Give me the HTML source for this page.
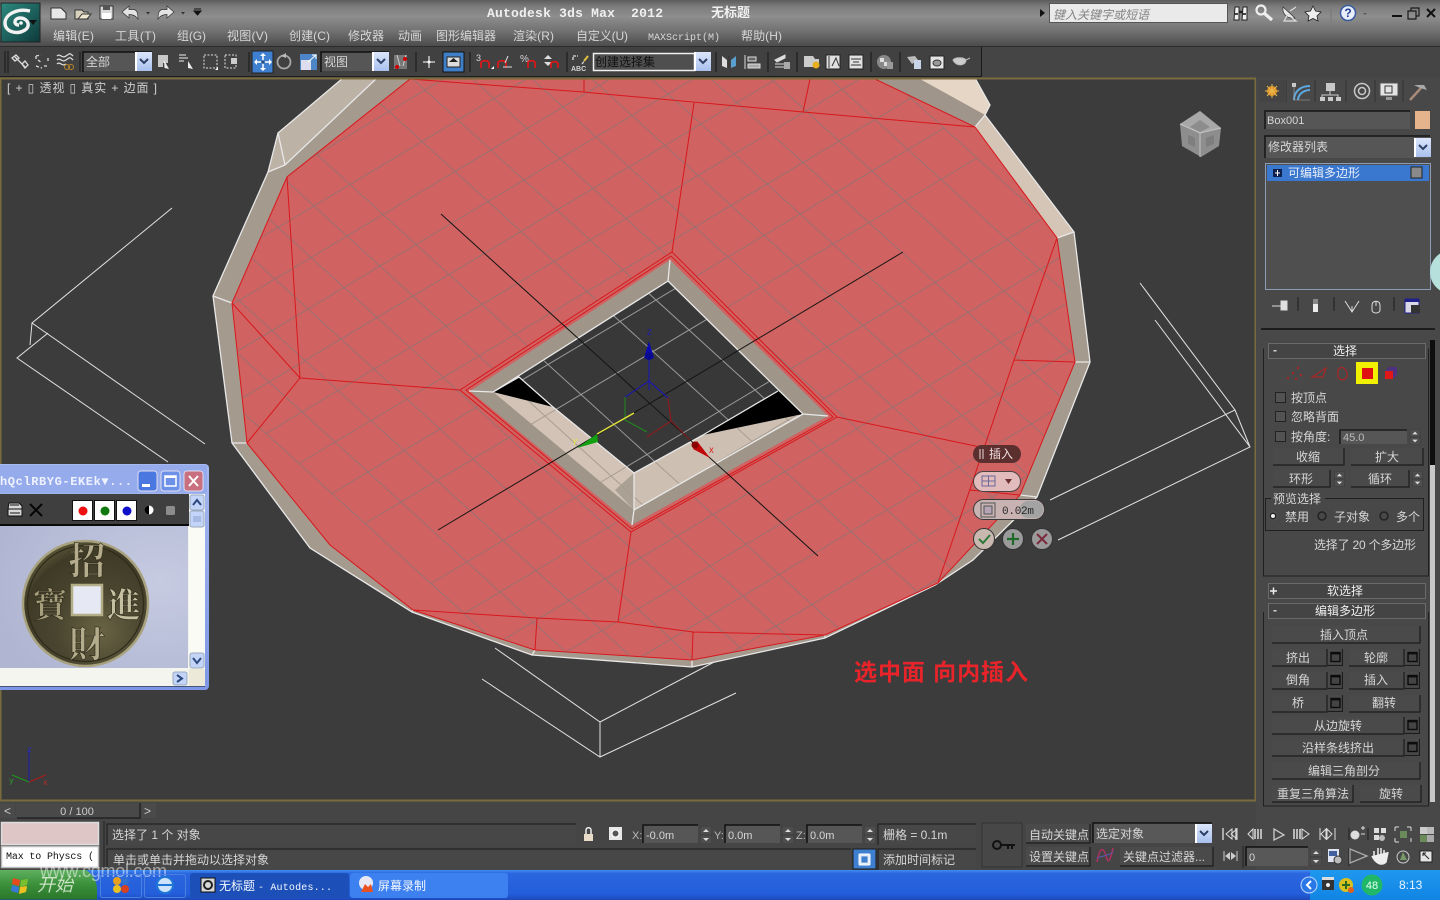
<!DOCTYPE html>
<html lang="zh"><head><meta charset="utf-8"><title>无标题 - Autodesk 3ds Max 2012</title>
<style>
html,body{margin:0;padding:0;background:#444;width:1440px;height:900px;overflow:hidden}
#wrap{position:relative;width:1440px;height:900px;overflow:hidden}
svg{display:block;position:absolute;left:0;top:0;overflow:hidden}
text{font-family:"Liberation Sans","Noto Sans CJK SC",sans-serif;font-size:12px;fill:#d6d6d6;white-space:pre}
.m{font-family:"Liberation Mono","Noto Sans CJK SC",monospace}
.c{text-anchor:middle}
.b{fill:#4a4a4a}
.k{fill:none;stroke:#1c1c1c;stroke-width:1.2}
.f{fill:#565656}
.w{fill:none;stroke:#e8e8e8;stroke-width:1.3}
.ic{fill:none;stroke:#dcdcdc;stroke-width:1.3}
.wire{fill:none;stroke:#e2e2e2;stroke-width:1}
.r{fill:none;stroke:#d8181c;stroke-width:1}
.hd{fill:#444;stroke:#6a6a6a;stroke-width:1}
.grp{fill:none;stroke:#202020;stroke-width:1}
.cn{font-family:"Noto Serif CJK SC",serif;font-weight:bold;stroke:#2e2a1a;stroke-width:.6}
</style></head><body><div id="wrap">
<svg width="1440" height="900" viewBox="0 0 1440 900" xmlns="http://www.w3.org/2000/svg">
<defs>
<linearGradient id="tb" x1="0" y1="0" x2="0" y2="1"><stop offset="0" stop-color="#5c5c5c"/><stop offset=".14" stop-color="#7c7c7c"/><stop offset=".36" stop-color="#8e8e8e"/><stop offset=".7" stop-color="#6e6e6e"/><stop offset="1" stop-color="#4c4c4c"/></linearGradient>
<linearGradient id="app" x1="0" y1="0" x2="1" y2="1"><stop offset="0" stop-color="#2c8a7f"/><stop offset="1" stop-color="#0e3a3c"/></linearGradient>
<linearGradient id="cab" x1="0" y1="0" x2="0" y2="1"><stop offset="0" stop-color="#dbe6fb"/><stop offset="1" stop-color="#a9c0ee"/></linearGradient>
<linearGradient id="task" x1="0" y1="0" x2="0" y2="1"><stop offset="0" stop-color="#3f8cf3"/><stop offset=".12" stop-color="#2a66de"/><stop offset=".8" stop-color="#245edb"/><stop offset="1" stop-color="#1c48b8"/></linearGradient>
<linearGradient id="start" x1="0" y1="0" x2="0" y2="1"><stop offset="0" stop-color="#5fb05f"/><stop offset=".5" stop-color="#3a8f3a"/><stop offset="1" stop-color="#2a772a"/></linearGradient>
<linearGradient id="tray" x1="0" y1="0" x2="0" y2="1"><stop offset="0" stop-color="#1f98ee"/><stop offset="1" stop-color="#1184e4"/></linearGradient>
<linearGradient id="xp" x1="0" y1="0" x2="0" y2="1"><stop offset="0" stop-color="#a5b9f0"/><stop offset="1" stop-color="#7d97e6"/></linearGradient>
<radialGradient id="coin" cx=".62" cy=".72" r=".75"><stop offset="0" stop-color="#6a6444"/><stop offset=".45" stop-color="#4a4630"/><stop offset=".85" stop-color="#3e3a26"/><stop offset="1" stop-color="#5a5638"/></radialGradient>
<radialGradient id="pic" cx=".85" cy=".4" r=".9"><stop offset="0" stop-color="#c6cbe2"/><stop offset="1" stop-color="#b0b6d2"/></radialGradient>
<clipPath id="vp"><rect x="1" y="79" width="1253" height="721"/></clipPath>
<clipPath id="redc"><path d="M410 79 287 177 232 303 247 443 330 545 413 610 535 650 692 660 825 635 938 583 1020 495 1075 362 1057 238 975 127 875 79Z"/></clipPath>
<clipPath id="floorc"><path d="M668 281 778 391 703 435 634 473 553 407 519 377Z"/></clipPath>
<clipPath id="creamc"><path d="M493 392 553 407 634 473 703 435 803 414 634 510Z"/></clipPath>
<symbol id="ca" viewBox="0 0 17 19" width="17" height="19"><rect width="17" height="19" fill="url(#cab)"/><rect width="2" height="19" fill="#fff"/><path d="M5 7 9 11 13 7" fill="none" stroke="#2c3f66" stroke-width="2"/></symbol>
<symbol id="sp" viewBox="0 0 12 18" width="12" height="18"><rect width="12" height="18" fill="#3a3a3a"/><rect x=".5" y=".5" width="11" height="8" fill="#4e4e4e"/><rect x=".5" y="9.5" width="11" height="8" fill="#4e4e4e"/><path d="M3 6 6 3 9 6ZM3 12 6 15 9 12Z" fill="#ddd"/></symbol>
<symbol id="sq" viewBox="0 0 15 17" width="15" height="17"><rect width="15" height="17" fill="#4a4a4a"/><path d="M14.5 0V16.5H0" class="k"/><rect x="3" y="3.5" width="9" height="9" fill="#444" stroke="#0c0c0c" stroke-width="1.4"/><rect x="3" y="3" width="9" height="2.4" fill="#0c0c0c"/></symbol>
</defs>

<!-- base -->
<rect width="1440" height="900" fill="#454545"/>
<rect width="1440" height="46" fill="url(#tb)"/>
<rect y="46" width="1440" height="1" fill="#2c2c2c"/>
<rect x="0" y="47" width="982" height="30" fill="#414141"/>
<path d="M981.5 47V77" stroke="#1a1a1a"/>
<rect x="0" y="76" width="982" height="1" fill="#1e1e1e"/>

<!-- viewport -->
<rect x="0" y="78" width="1256" height="723" fill="#3c3c3c"/>
<g clip-path="url(#vp)">
<!-- wire boxes -->
<path class="wire" d="M172 208 32 323 205 444M48 333 17 358 168 462M32 323 30 345"/>
<path class="wire" d="M1140 283 1235 410 1050 500M1155 320 1250 447 1058 540M1235 410 1250 447"/>
<path class="wire" d="M495 648 600 722 718 660M482 679 600 757 736 693M600 722V757"/>
<!-- outer body -->
<path d="M343 78 278 133 268 172 213 296 232 443 310 548 412 612 532 655 692 667 825 638 935 585 973 560 1037 497 1090 362 1074 232 985 115 990 105 975 78Z" fill="#a59a8e"/>
<path d="M343 78 377 78 285 165 268 172 278 133Z" fill="#bdb2a6"/>
<path d="M918 78 975 78 990 105 985 115Z" fill="#e6d6c6"/>
<path d="M985 115 1074 232 1057 238 975 127Z" fill="#d4c5b6"/>
<path d="M875 78 918 78 985 115 975 127Z" fill="#a0958a"/>
<path class="w" d="M343 78 278 133 268 172 213 296 232 443 310 548 412 612 532 655 692 667 825 638 935 585 973 560 1037 497 1090 362 1074 232 985 115 990 105 975 78"/>
<path class="w" d="M377 78 285 165 268 172M278 133 285 165M213 296 232 303M232 443 247 443M412 612 413 608M532 655 535 650M692 667 692 660M825 638 825 635M935 585 938 583M1037 497 1020 495M1090 362 1075 362M1074 232 1057 238M985 115 975 127"/>
<!-- red face -->
<path d="M410 79 287 177 232 303 247 443 330 545 413 610 535 650 692 660 825 635 938 583 1020 495 1075 362 1057 238 975 127 875 79Z" fill="#d06262"/>
<!-- grid -->
<g clip-path="url(#redc)"><g transform="matrix(33 30 36 -21.5 650 403)"><path vector-effect="non-scaling-stroke" fill="none" stroke="#9c7070" stroke-width="1" d="M-10 -7V10M-9 -7V10M-8 -7V10M-7 -7V10M-6 -7V10M-5 -7V10M-4 -7V10M-3 -7V10M-2 -7V10M-1 -7V10M1 -7V10M2 -7V10M3 -7V10M4 -7V10M5 -7V10M6 -7V10M7 -7V10M8 -7V10M-10 -7H8M-10 -6H8M-10 -5H8M-10 -4H8M-10 -3H8M-10 -2H8M-10 -1H8M-10 1H8M-10 2H8M-10 3H8M-10 4H8M-10 5H8M-10 6H8M-10 7H8M-10 8H8M-10 9H8M-10 10H8"/></g></g>
<!-- red lines -->
<path class="r" d="M410 79 287 177 232 303 247 443 330 545 413 610 535 650 692 660 825 635 938 583 1020 495 1075 362 1057 238 975 127 875 79M410 79 583 92 803 112 975 127M584 79V92M810 79 803 112M694 103 672 252M287 177 300 378 247 443M232 303 300 378 460 390M837 417 985 448M970 490 1020 495M1057 238 1014 360 938 583M1014 360 1075 362M631 532 618 622M413 610 537 618 618 622 693 632 825 635M537 618 535 650M693 632 692 660"/>
<!-- hole -->
<path d="M672 252 837 417 631 532 460 390Z" fill="#d06262"/>
<path d="M470 391 670 260 828 416 632 525Z" fill="#a09589"/>
<path class="r" d="M672 252 837 417 631 532 460 390ZM466 390 671 256 833 417 632 529Z"/>
<path d="M493 392 668 281 803 414 634 510Z" fill="#383838"/>
<path d="M493 392 519 377 553 407Z" fill="#000"/><path d="M803 414 778 391 703 435Z" fill="#000"/>
<path d="M493 392 553 407 634 473 634 510Z" fill="#d2c3b6"/>
<path d="M634 510 634 473 703 435 803 414Z" fill="#cdbfb2"/>
<path d="M615 490 634 473 634 510Z" fill="#aaa094"/>
<g clip-path="url(#creamc)"><g transform="matrix(33 30 36 -21.5 650 403)"><path vector-effect="non-scaling-stroke" fill="none" stroke="#a89d92" d="M-1 -5V5M1 -5V5M2 -5V5M3 -5V5M4 -5V5M-4 -5H4M-4 -4H4M-4 -3H4M-4 -2H4M-4 -1H4M-4 1H4M-4 2H4M-4 3H4"/></g></g>
<g clip-path="url(#floorc)"><g transform="matrix(33 30 36 -21.5 650 403)"><path vector-effect="non-scaling-stroke" fill="none" stroke="#9a9a9a" d="M-4 -5V5M-3 -5V5M-2 -5V5M-1 -5V5M1 -5V5M2 -5V5M3 -5V5M-5 -4H4M-5 -3H4M-5 -2H4M-5 -1H4M-5 1H4M-5 2H4M-5 3H4"/></g></g>
<path class="w" d="M469 391 493 392 668 281 670 260M668 281 803 414 828 416M803 414 634 510 632 525M634 510V473L703 435M634 473 553 407 519 377 493 392M703 435 778 391"/>
<!-- world axes -->
<path d="M441 214 818 556M438 530 903 252" stroke="#141414" stroke-width="1" fill="none"/>
<!-- gizmo -->
<path d="M649 360V390M625 397 649 381 668 398" fill="none" stroke="#1a1aa8" stroke-width="1.2"/>
<path d="M625 397V420L647 432" fill="none" stroke="#1f8a1f"/>
<path d="M668 398 671 421 647 437" fill="none" stroke="#8a1c1c" stroke-width="1.2"/>
<path d="M671 421 690 440" stroke="#8a1c1c"/>
<path d="M634 413 597 434" stroke="#e6e63a" stroke-width="1.3"/>
<path d="M649 341 654 358 649 360 644 358Z" fill="#0a0ab0"/><circle cx="649" cy="356" r="4" fill="#0a0a90"/>
<path d="M577 448 597 434 598 442Z" fill="#10a010"/>
<path d="M710 458 693 449 697 441Z" fill="#c00808"/><circle cx="695" cy="445" r="3.5" fill="#800"/>
<text x="647" y="335" class="m" style="font-size:8px;fill:#1a1ac0">Z</text><text x="572" y="445" class="m" style="font-size:9px;fill:#e8e83a">Y</text><text x="709" y="453" class="m" style="font-size:8px;fill:#d81010">X</text>
<!-- red note -->
<text x="854" y="680" style="font-size:23px;font-weight:bold;fill:#e8242a" textLength="174">选中面 向内插入</text>
<!-- caddy -->
<rect x="973" y="445" width="48" height="18" rx="9" fill="#5c2f2f"/><path d="M980 449V459M983 449V459" stroke="#e8d8d8"/><text x="989" y="458" style="fill:#f0e0e0">插入</text>
<rect x="973.5" y="471.5" width="47" height="20" rx="10" fill="#e2bcbc" stroke="#4a4444"/>
<path d="M982 476H995V486H982ZM988.5 476V486M982 481H995" fill="none" stroke="#6a6a9a"/><path d="M1005 479H1012L1008.500 484Z" fill="#6a3030"/>
<rect x="973.5" y="499.500" width="71" height="20" rx="10" fill="#c9b2b2" stroke="#3a3a3a"/><rect x="1020" y="501" width="23" height="17" rx="8" fill="#a3a3a3"/>
<rect x="981" y="503" width="14" height="14" fill="none" stroke="#555"/><rect x="984" y="506" width="8" height="8" fill="#b5a5b5" stroke="#555"/>
<text x="1002" y="514" class="m" style="font-size:11px;fill:#2a2a2a" textLength="32">0.02m</text>
<circle cx="984" cy="539" r="10.500" fill="#c8b8b0" stroke="#333"/><path d="M979 539 983 543 990 535" fill="none" stroke="#2f7a3a" stroke-width="2"/>
<circle cx="1013" cy="539" r="10.500" fill="#9a9a9a" stroke="#333"/><path d="M1013 533V545M1007 539H1019" stroke="#1f6a2a" stroke-width="2.2"/>
<circle cx="1042" cy="539" r="10.500" fill="#9a9a9a" stroke="#333"/><path d="M1037 534 1047 544M1047 534 1037 544" stroke="#7a2a3a" stroke-width="2"/>
<!-- view cube -->
<path d="M1180 124 1200 111 1221 128 1219 146 1201 157 1182 146Z" fill="#8e8e8e"/><path d="M1180 124 1200 133 1221 128 1200 111Z" fill="#a8a8a8"/><path d="M1200 133V157M1180 124 1200 133 1221 128" stroke="#c4c4c4" fill="none"/><path d="M1190 127 1200 120 1210 127 1200 132Z" fill="#8c8c8c"/><path d="M1188 135 1195 138V147L1188 144ZM1206 138 1214 135V144L1206 147Z" fill="#7e7e7e"/>
<!-- small axes -->
<path d="M29 782V750" stroke="#1a1ab0"/><path d="M29 782 46 775" stroke="#b01a1a"/><path d="M29 782 12 775" stroke="#1a9a1a"/>
<text x="27" y="752" class="m" style="font-size:8px;fill:#2a2ac0">z</text><text x="43" y="785" class="m" style="font-size:8px;fill:#c02a2a">x</text><text x="9" y="783" class="m" style="font-size:8px;fill:#2aa02a">y</text>
</g>
<rect x=".5" y="78.500" width="1255" height="722" fill="none" stroke="#7a6b3c" stroke-width="2"/>
<text x="7" y="92" style="font-size:12px;fill:#cfcfcf" xml:space="preserve" textLength="150">[ + ▯ 透视 ▯ 真实 + 边面 ]</text>

<!-- app button -->
<rect x="1" y="3" width="39" height="39" fill="url(#app)" stroke="#222"/>
<path d="M30 11C18 8 5 14 5 23C5 32 17 35 25 30C31 26 28 18 20 18C14 18 13 25 19 25" fill="none" stroke="#f2f2f2" stroke-width="3.4"/><circle cx="21" cy="23" r="1.800" fill="#fff"/>
<path d="M29 20H37L33 25Z" fill="#111"/>
<!-- quick access -->
<path d="M51 8H61L66 13V19H51Z" fill="#e8e8e8" stroke="#333"/>
<path d="M75 10H82L84 12H88V19H75Z" fill="#d8d2bc" stroke="#333"/><path d="M78 19 82 14H91L87 19Z" fill="#eee6d0" stroke="#333"/>
<rect x="100" y="6" width="13" height="13" fill="#d8d8d8" stroke="#333"/><rect x="103" y="6" width="7" height="4" fill="#555"/><rect x="102" y="13" width="9" height="6" fill="#fff"/>
<path d="M122 12 129 6V9.500H133C137 9.500 138 13 138 19C136 16 133 14.500 129 14.500V18Z" fill="#e4e4e4" stroke="#333" stroke-width=".7"/>
<path d="M146 12H150L148 14.500Z" fill="#333"/>
<path d="M174 12 167 6V9.500H163C159 9.500 158 13 158 19C160 16 163 14.500 167 14.500V18Z" fill="#e4e4e4" stroke="#333" stroke-width=".7"/>
<path d="M181 12H185L183 14.500Z" fill="#333"/>
<path d="M194 9H201M194 11H201L197.500 15Z" fill="#111" stroke="#111"/>
<!-- title -->
<text x="487" y="17" class="m" style="font-size:13px;font-weight:bold;fill:#f0f0f0" textLength="176" xml:space="preserve">Autodesk 3ds Max  2012</text>
<text x="711" y="17" style="font-size:13px;font-weight:bold;fill:#f2f2f2">无标题</text>
<!-- search -->
<path d="M1040 9 1045 13 1040 17Z" fill="#111"/>
<rect x="1049.500" y="3.500" width="178" height="19" fill="#eaeaea" stroke="#555"/>
<text x="1053" y="19" style="font-style:italic;fill:#848484">键入关键字或短语</text>
<path d="M1235 7H1239V20H1234ZM1243 7H1247V20H1242Z" fill="#f0f0f0" stroke="#222"/><path d="M1239 12H1243" stroke="#222" stroke-width="2.500"/><path d="M1235 14H1238M1243 14H1246" stroke="#444" stroke-width="2"/>
<circle cx="1261" cy="10" r="4.500" fill="none" stroke="#eee" stroke-width="2.200"/><path d="M1264 13 1272 20" stroke="#eee" stroke-width="3.200"/>
<path d="M1283 7C1282 14 1287 19 1295 18Z" fill="#e8e8e8" stroke="#333" stroke-width=".7"/><path d="M1288 14 1284 21H1296L1291 17M1290 11 1296 7" fill="none" stroke="#ddd" stroke-width="1.200"/>
<path d="M1313 6 1315.500 11 1321 12 1317 16 1318 21 1313 18.500 1308 21 1309 16 1305 12 1310.500 11Z" fill="#eee" stroke="#222" stroke-width=".8"/>
<path d="M1331 4V22" stroke="#777"/>
<circle cx="1348" cy="13" r="7.500" fill="#e8eefa" stroke="#3a5aa0" stroke-width="1.500"/><text x="1348" y="17" class="c" style="font-size:12px;font-weight:bold;fill:#1f3f90">?</text>
<path d="M1363 13H1367L1365 15Z" fill="#555"/>
<rect x="1392" y="15" width="10" height="2" fill="#111"/>
<path d="M1408 11H1416V19H1408ZM1411 11V8H1419V16H1416" fill="none" stroke="#1a1a1a" stroke-width="1.200"/>
<path d="M1427 9 1435 17M1435 9 1427 17" stroke="#111" stroke-width="2"/>
<!-- menu -->
<g style="fill:#e2e2e2">
<text x="53" y="40" textLength="41">编辑(E)</text><text x="115" y="40" textLength="41">工具(T)</text><text x="177" y="40" textLength="29">组(G)</text><text x="227" y="40" textLength="41">视图(V)</text><text x="289" y="40" textLength="41">创建(C)</text><text x="348" y="40">修改器</text><text x="398" y="40">动画</text><text x="436" y="40">图形编辑器</text><text x="513" y="40" textLength="41">渲染(R)</text><text x="576" y="40" textLength="52">自定义(U)</text><text x="648" y="40" class="m" style="font-size:10px" textLength="72">MAXScript(M)</text><text x="741" y="40" textLength="41">帮助(H)</text>
</g>

<!-- main toolbar -->
<path d="M5 51V73M8 51V73M80 52V72M249 52V72M416 52V72M470 52V72M567 52V72M716 52V72M768 52V72M797 52V72M871 52V72M900 52V72" stroke="#1f1f1f" stroke-width="1.200"/>
<path class="ic" d="M14 56 19 61 22 64 26 68M12 58 16 55 19 58 15 61ZM22 64 25 61 28 65 25 68Z"/>
<path class="ic" d="M36 56 41 55M36 56 36 60M48 58 48 62M36 66 42 68M44 66 48 66M38 60 42 63" stroke-dasharray="3 2"/>
<path class="ic" d="M57 56C60 53 62 59 66 56S70 53 73 56M57 60C60 57 62 63 66 60S70 57 73 60M57 64C60 61 62 67 66 64"/><circle cx="67" cy="67" r="2.500" fill="none" stroke="#b8862a"/><circle cx="71" cy="67" r="2.500" fill="none" stroke="#b8862a"/>
<rect x="83" y="52" width="69" height="19" fill="#565656"/><path d="M83 72V52H152" stroke="#111" fill="none" stroke-width="1.500"/><text x="86" y="66">全部</text><use href="#ca" x="135" y="52"/>
<path d="M158 55H168V63H163V67H158Z" fill="#c8c8c8"/><path d="M164 60 169 69 164.500 68Z" fill="#eee"/>
<path d="M179 55H186M179 58H188M179 61H184" stroke="#eee"/><path d="M188 61 193 69 188 68Z" fill="#eee"/>
<rect x="204" y="55" width="13" height="13" fill="none" stroke="#e0e0e0" stroke-dasharray="2 1.500"/><path d="M218 67 215 70H218Z" fill="#fff"/>
<rect x="225" y="55" width="11" height="13" fill="none" stroke="#e0e0e0" stroke-dasharray="2 1.500"/><rect x="231" y="58" width="6" height="6" fill="#ccc"/>
<rect x="252" y="51" width="21" height="22" fill="#3f7fd0" stroke="#222"/>
<path d="M263 55V69M256 62H270" stroke="#fff" stroke-width="1.500"/><path d="M263 53 266 56H260ZM263 71 266 68H260ZM254 62 257 59V65ZM272 62 269 59V65Z" fill="#fff"/><circle cx="263" cy="62" r="1.800" fill="#20508a"/>
<circle cx="284" cy="62" r="6.500" fill="none" stroke="#a8a8a8" stroke-width="1.800"/><path d="M286 53 281 56 286 58Z" fill="#bbb"/>
<rect x="300" y="54" width="17" height="16" fill="#4c86c8"/><rect x="301" y="60" width="10" height="10" fill="#dde"/><path d="M308 62 316 55M312 55H316V59" stroke="#fff" fill="none"/>
<rect x="321" y="52" width="68" height="19" fill="#565656"/><path d="M321 72V52H389" stroke="#111" fill="none" stroke-width="1.500"/><text x="324" y="66">视图</text><use href="#ca" x="372" y="52"/>
<rect x="394" y="55" width="13" height="14" fill="#777"/><path d="M397 55 400 66M406 55 403 66" stroke="#ccc"/><circle cx="397" cy="67" r="2" fill="#c00"/><circle cx="405" cy="59" r="2" fill="#c00"/>
<path class="ic" d="M429 56V68M423 62H435"/><circle cx="429" cy="62" r="1.500" fill="#fff"/>
<rect x="443" y="52" width="21" height="20" fill="#3f7fc8" stroke="#111"/><rect x="447" y="57" width="13" height="10" fill="#ddd" stroke="#222"/><path d="M453.500 58 458 62H449Z" fill="#222"/>
<text x="476" y="61" style="font-size:9px">3</text><path d="M481 68V63C481 60 489 60 489 63V68" fill="none" stroke="#d81818" stroke-width="1.800"/><path d="M491 69 494 66V69Z" fill="#fff"/>
<path d="M498 68V63C498 60 506 60 506 63V68" fill="none" stroke="#d81818" stroke-width="1.800"/><path d="M508 56 505 63M503 67H512" stroke="#ddd" fill="none"/>
<text x="520" y="62" style="font-size:10px">%</text><path d="M528 68V63C528 60 535 60 535 63V68" fill="none" stroke="#d81818" stroke-width="1.800"/>
<path d="M544 59 548 55 552 59ZM544 62 548 66 552 62Z" fill="#ddd"/><path d="M551 68V64C551 61 558 61 558 64V68" fill="none" stroke="#d81818" stroke-width="1.800"/>
<path class="ic" d="M573 60V56H578M582 64 588 56" stroke-dasharray="3 1"/><path d="M584 61 588 56" stroke="#e0c040" stroke-width="2"/>
<text x="571" y="71" style="font-size:7px;font-weight:bold">ABC</text>
<rect x="593.500" y="53.500" width="101" height="17" fill="#4f4f4f" stroke="#f0f0f0" stroke-width="1.500"/><text x="595" y="66" style="fill:#111">创建选择集</text><use href="#ca" x="694" y="52"/>
<path d="M722 56 727 60V68L722 66Z" fill="#ddd"/><path d="M729 56V68" stroke="#333"/><path d="M736 56 731 60V68L736 66Z" fill="#59a0d0"/>
<path d="M745 55V69" stroke="#ddd"/><path d="M748 57H756V61H748Z" fill="#666" stroke="#ddd"/><path d="M748 64H760V68H748Z" fill="#aaa" stroke="#ddd"/>
<path d="M775 60 785 55V58L777 62ZM775 64H788M775 67H785" stroke="#ddd" fill="#ddd"/><rect x="784" y="62" width="6" height="7" fill="#aaa"/>
<path d="M804 56H813L815 59H819V67H804Z" fill="#ccc"/><circle cx="816" cy="65" r="3.500" fill="#e8b020"/>
<rect x="826" y="55" width="14" height="14" fill="#e0e0e0" stroke="#222"/><path d="M829 56V68M832 66 836 58 839 66" fill="none" stroke="#333"/>
<rect x="849" y="55" width="14" height="14" fill="#e0e0e0" stroke="#222"/><path d="M851 59H861M851 65H861M853 62H859" stroke="#333"/>
<circle cx="884" cy="62" r="7" fill="#888"/><path d="M880 58H884V62H880ZM884 62H888V66H884Z" fill="#ddd"/><rect x="887" y="62" width="6" height="7" fill="#999"/>
<path d="M907 57 915 56 918 60 912 64Z" fill="#bbb"/><rect x="914" y="60" width="7" height="9" fill="#c8d4e8"/>
<rect x="930" y="56" width="14" height="13" fill="#e4e4e4" stroke="#222"/><path d="M933 63C933 59 941 59 941 63C941 67 933 67 933 63" fill="#999" stroke="#333"/>
<path d="M953 60C955 57 964 57 966 60C966 66 956 67 953 60ZM966 60 970 58" fill="#ccc" stroke="#bbb"/>

<!-- right panel -->
<rect x="1256" y="78" width="184" height="792" fill="#484848"/>
<path d="M1286 80V102M1315 80V102M1346 80V102M1375 80V102M1403 80V102" stroke="#333"/>
<rect x="1259" y="80" width="27" height="22" fill="#444"/>
<circle cx="1272" cy="91" r="5" fill="#e09020"/><path d="M1265 91H1279M1272 84V98M1267 86 1277 96M1277 86 1267 96" stroke="#e8b850"/>
<path d="M1294 100C1294 92 1300 86 1310 86M1298 100C1298 95 1303 90 1310 90" fill="none" stroke="#5ca8e0" stroke-width="2"/><rect x="1292" y="83" width="4" height="4" fill="#ccc"/><path d="M1294 85V100H1310" fill="none" stroke="#aaa" stroke-width=".6"/>
<rect x="1326" y="83" width="9" height="8" fill="#c8c8c8"/><path d="M1330 91V95M1322 101V95H1338V101" fill="none" stroke="#ccc"/><rect x="1320" y="97" width="5" height="4" fill="#ccc"/><rect x="1328" y="97" width="5" height="4" fill="#ccc"/><rect x="1336" y="97" width="5" height="4" fill="#ccc"/>
<circle cx="1362" cy="91" r="7.500" fill="none" stroke="#c8c8c8" stroke-width="1.500"/><circle cx="1362" cy="91" r="3.500" fill="none" stroke="#c8c8c8" stroke-width="1.500"/>
<rect x="1380" y="83" width="18" height="13" fill="#e4e4e4" stroke="#555"/><rect x="1385" y="86" width="7" height="7" fill="none" stroke="#333"/><rect x="1386" y="97" width="6" height="3" fill="#999"/>
<path d="M1410 100 1421 88" stroke="#a88a78" stroke-width="2.500"/><path d="M1414 85H1424L1427 90 1420 88Z" fill="#aaa"/>
<rect x="1265" y="111" width="145" height="18" class="f"/><path d="M1265 129V111H1410" stroke="#151515" fill="none" stroke-width="1.500"/><text x="1267" y="124" style="font-size:11px">Box001</text>
<rect x="1415" y="111" width="15" height="18" fill="#e6b48c"/>
<rect x="1265" y="136" width="165" height="22" class="f"/><path d="M1265 158V136H1430" stroke="#151515" fill="none" stroke-width="1.500"/><text x="1268" y="151" style="font-size:12px">修改器列表</text><use href="#ca" x="1414" y="138"/>
<rect x="1265.500" y="163.500" width="165" height="126" fill="#4f4f4f" stroke="#8c9cb4"/><rect x="1267" y="165" width="162" height="1" fill="#222"/>
<rect x="1267" y="165" width="162" height="16" fill="#3a78d0"/>
<rect x="1273" y="169" width="9" height="8" fill="#10204c"/><path d="M1277.500 170V176M1275 173H1280" stroke="#fff"/>
<text x="1288" y="177" style="fill:#e8eef8">可编辑多边形</text><rect x="1411" y="167" width="11" height="11" fill="#8a8a8a" stroke="#222"/>
<circle cx="1452" cy="272" r="22" fill="#b5e0dc"/>
<path d="M1272 306H1281M1281 301H1287V310H1281Z" fill="#e0e0e0" stroke="#ddd"/>
<path d="M1298 297V311M1334 297V311M1394 297V311" stroke="#1c1c1c"/>
<rect x="1313" y="299" width="5" height="13" fill="#ececec"/><rect x="1313" y="299" width="5" height="5" fill="#888"/>
<path d="M1345 301 1352 312 1359 301M1352 312V306" fill="none" stroke="#ddd"/>
<path d="M1372 305C1372 300 1380 300 1380 305V310C1380 314 1372 314 1372 310Z" fill="none" stroke="#ddd"/><path d="M1376 301V306" stroke="#ddd"/>
<rect x="1405" y="299" width="14" height="14" fill="#d8d8e8" stroke="#20208a"/><rect x="1405" y="299" width="14" height="3" fill="#20208a"/><rect x="1411" y="305" width="9" height="8" fill="#333"/>
<rect x="1261" y="328" width="174" height="2" fill="#1c1c1c"/>
<!-- panel scrollbar -->
<rect x="1430" y="340" width="5" height="125" fill="#0e0e0e"/><rect x="1430" y="465" width="5" height="337" fill="#c8c8c8"/>
<!-- select rollout -->
<path class="grp" d="M1263.500 348.500V576H1428.500V348.500"/>
<rect x="1268.500" y="343.500" width="157" height="15" class="hd"/><text x="1273" y="354" style="font-weight:bold">-</text><text x="1345" y="355" class="c" style="fill:#eee">选择</text>
<g fill="#a52828"><circle cx="1288" cy="378" r="1.200"/><circle cx="1293" cy="373" r="1.200"/><circle cx="1298" cy="368" r="1.200"/><circle cx="1301" cy="375" r="1.200"/><circle cx="1296" cy="379" r="1.200"/></g>
<path d="M1312 377 1326 368 1323 377Z" fill="none" stroke="#a52828" stroke-width="1.300"/>
<path d="M1338 370C1342 364 1348 370 1347 376C1345 382 1338 380 1338 376Z" fill="none" stroke="#a52828" stroke-width="1.300"/>
<rect x="1356" y="362" width="22" height="22" fill="#f0f000"/><rect x="1362" y="368" width="11" height="11" fill="#e01010"/>
<path d="M1385 371 1389 367H1397V375L1393 379H1385Z" fill="#503080"/><rect x="1385" y="371" width="8" height="8" fill="#e01818"/>
<rect x="1275.500" y="392.500" width="10" height="10" fill="#525252" stroke="#222"/><rect x="1275.500" y="411.500" width="10" height="10" fill="#525252" stroke="#222"/><rect x="1275.500" y="431.500" width="10" height="10" fill="#525252" stroke="#222"/>
<text x="1291" y="402">按顶点</text><text x="1291" y="421">忽略背面</text><text x="1291" y="441">按角度:</text>
<rect x="1340" y="430" width="67" height="14" class="f"/><path d="M1340 444V430H1407" stroke="#111" fill="none" stroke-width="1.300"/><text x="1343" y="441" style="font-size:11px;fill:#bbb">45.0</text><use href="#sp" x="1409" y="429" width="12" height="16"/>
<rect x="1273" y="448" width="71" height="17" class="b"/><path class="k" d="M1273 465H1344V448"/><text x="1308" y="461" class="c">收缩</text>
<rect x="1351" y="448" width="72" height="17" class="b"/><path class="k" d="M1351 465H1423V448"/><text x="1387" y="461" class="c">扩大</text>
<rect x="1273" y="470" width="57" height="17" class="b"/><path class="k" d="M1273 487H1330V470"/><text x="1301" y="483" class="c">环形</text><use href="#sp" x="1334" y="471" width="11" height="16"/>
<rect x="1351" y="470" width="58" height="17" class="b"/><path class="k" d="M1351 487H1409V470"/><text x="1380" y="483" class="c">循环</text><use href="#sp" x="1412" y="471" width="11" height="16"/>
<rect x="1265.500" y="498.500" width="158" height="32" class="grp"/><rect x="1271" y="492" width="54" height="13" fill="#484848"/><text x="1273" y="503">预览选择</text>
<circle cx="1273" cy="516" r="4" fill="#222" stroke="#555"/><circle cx="1273" cy="516" r="2" fill="#eee"/><circle cx="1322" cy="516" r="4" fill="#484848" stroke="#222" stroke-width="1.500"/><circle cx="1384" cy="516" r="4" fill="#484848" stroke="#222" stroke-width="1.500"/>
<text x="1285" y="521">禁用</text><text x="1334" y="521">子对象</text><text x="1396" y="521">多个</text>
<text x="1314" y="549" textLength="102" xml:space="preserve">选择了 20 个多边形</text>
<!-- soft -->
<rect x="1268.500" y="583.500" width="157" height="15" class="hd"/><text x="1345" y="595" class="c" style="fill:#eee">软选择</text><path d="M1270 591H1277M1273.500 587.500V594.500" stroke="#eee" stroke-width="1.500"/>
<!-- edit poly -->
<path class="grp" d="M1263.500 612V806H1428.500V612"/>
<rect x="1268.500" y="603.500" width="157" height="15" class="hd"/><text x="1273" y="614" style="font-weight:bold">-</text><text x="1345" y="615" class="c" style="fill:#eee">编辑多边形</text>
<rect x="1272" y="626" width="148" height="17" class="b"/><path class="k" d="M1272 643H1420V626"/><text x="1344" y="639" class="c">插入顶点</text>
<rect x="1272" y="649" width="55" height="17" class="b"/><path class="k" d="M1272 666H1327V649"/><text x="1298" y="662" class="c">挤出</text><use href="#sq" x="1328" y="649"/>
<rect x="1349" y="649" width="55" height="17" class="b"/><path class="k" d="M1349 666H1404V649"/><text x="1376" y="662" class="c">轮廓</text><use href="#sq" x="1405" y="649"/>
<rect x="1272" y="672" width="55" height="17" class="b"/><path class="k" d="M1272 689H1327V672"/><text x="1298" y="684" class="c">倒角</text><use href="#sq" x="1328" y="672"/>
<rect x="1349" y="672" width="55" height="17" class="b"/><path class="k" d="M1349 689H1404V672"/><text x="1376" y="684" class="c">插入</text><use href="#sq" x="1405" y="672"/>
<rect x="1272" y="695" width="55" height="17" class="b"/><path class="k" d="M1272 712H1327V695"/><text x="1298" y="707" class="c">桥</text><use href="#sq" x="1328" y="695"/>
<rect x="1349" y="695" width="71" height="17" class="b"/><path class="k" d="M1349 712H1420V695"/><text x="1384" y="707" class="c">翻转</text>
<rect x="1272" y="717" width="132" height="17" class="b"/><path class="k" d="M1272 734H1404V717"/><text x="1338" y="730" class="c">从边旋转</text><use href="#sq" x="1405" y="717"/>
<rect x="1272" y="739" width="132" height="17" class="b"/><path class="k" d="M1272 756H1404V739"/><text x="1338" y="752" class="c">沿样条线挤出</text><use href="#sq" x="1405" y="739"/>
<rect x="1272" y="762" width="148" height="17" class="b"/><path class="k" d="M1272 779H1420V762"/><text x="1344" y="775" class="c">编辑三角剖分</text>
<rect x="1272" y="785" width="81" height="17" class="b"/><path class="k" d="M1272 802H1353V785"/><text x="1313" y="798" class="c">重复三角算法</text>
<rect x="1360" y="785" width="61" height="17" class="b"/><path class="k" d="M1360 802H1421V785"/><text x="1391" y="798" class="c">旋转</text>

<!-- time slider -->
<rect x="0" y="802" width="1256" height="68" fill="#454545"/>
<rect x="0" y="803" width="15" height="15" class="b"/><text x="4" y="815" style="fill:#ccc">&lt;</text>
<rect x="16" y="803" width="124" height="15" fill="#494949"/><path d="M17 818H140V803" class="k"/><text x="77" y="815" class="c" style="font-size:11px;fill:#ccc">0 / 100</text>
<rect x="142" y="803" width="14" height="15" class="b"/><text x="144" y="815" style="fill:#ccc">&gt;</text>
<!-- listener -->
<rect x="1.500" y="822.500" width="97" height="22" fill="#dfc6c6" stroke="#ddd" stroke-width="1.500"/>
<rect x="1.500" y="846.500" width="97" height="21" fill="#fff" stroke="#bbb" stroke-width="1.500"/>
<text x="6" y="859" class="m" style="font-size:10px;fill:#111" textLength="88">Max to Physcs (</text>
<path d="M104 821V868" stroke="#222"/>
<!-- status -->
<rect x="107" y="824" width="469" height="21" fill="#474747"/><path d="M107 845V824H576" stroke="#1a1a1a" fill="none"/>
<rect x="107" y="849" width="744" height="21" fill="#474747"/><path d="M107 870V849H851" stroke="#1a1a1a" fill="none"/>
<text x="112" y="839">选择了 1 个 对象</text><text x="113" y="864">单击或单击并拖动以选择对象</text>
<rect x="584" y="834" width="9" height="7" fill="#e8dcc8"/><path d="M586 834V830C586 827 591 827 591 830V834" fill="none" stroke="#eee" stroke-width="1.500"/>
<rect x="609" y="827" width="13" height="13" fill="#e8e8e8"/><circle cx="615.500" cy="833.500" r="3.500" fill="#555" stroke="#fff"/>
<text x="632" y="839" style="font-size:11px;fill:#bbb">X:</text><text x="714" y="839" style="font-size:11px;fill:#bbb">Y:</text><text x="796" y="839" style="font-size:11px;fill:#bbb">Z:</text>
<rect x="643" y="825" width="55" height="18" class="f"/><path d="M643 843V825H698" stroke="#111" fill="none" stroke-width="1.500"/><text x="646" y="839" style="font-size:11px">-0.0m</text><use href="#sp" x="700" y="826"/>
<rect x="725" y="825" width="55" height="18" class="f"/><path d="M725 843V825H780" stroke="#111" fill="none" stroke-width="1.500"/><text x="728" y="839" style="font-size:11px">0.0m</text><use href="#sp" x="782" y="826"/>
<rect x="807" y="825" width="55" height="18" class="f"/><path d="M807 843V825H862" stroke="#111" fill="none" stroke-width="1.500"/><text x="810" y="839" style="font-size:11px">0.0m</text><use href="#sp" x="864" y="826"/>
<rect x="878" y="824" width="98" height="21" fill="#474747"/><path d="M878 845V824H976" stroke="#1a1a1a" fill="none"/><text x="883" y="839">栅格 = 0.1m</text>
<rect x="853" y="849" width="23" height="20" fill="#3f7fd0" stroke="#1a1a1a"/><rect x="859" y="854" width="11" height="11" rx="1" fill="#d8e4f4" stroke="#fff"/><rect x="861" y="856" width="7" height="7" fill="#3f7fd0" stroke="#fff" stroke-width=".7"/>
<rect x="878" y="849" width="98" height="21" fill="#474747"/><path d="M878 870V849H976" stroke="#1a1a1a" fill="none"/><text x="883" y="864">添加时间标记</text>
<!-- keys -->
<rect x="982" y="823" width="40" height="44" fill="#474747" stroke="#333"/><circle cx="997" cy="845" r="4" fill="none" stroke="#111" stroke-width="2"/><path d="M1001 845H1015M1008 845V849M1012 845V849" stroke="#111" stroke-width="2"/>
<rect x="1026" y="824" width="64" height="19" class="b"/><path class="k" d="M1026 843H1090V824"/><text x="1029" y="839">自动关键点</text>
<rect x="1026" y="847" width="64" height="19" class="b"/><path class="k" d="M1026 866H1090V847"/><text x="1029" y="861">设置关键点</text>
<rect x="1093" y="823" width="119" height="20" fill="#585858"/><path d="M1093 843V823H1212" stroke="#111" fill="none" stroke-width="1.500"/><text x="1096" y="838">选定对象</text><use href="#ca" x="1195" y="824"/>
<path d="M1097 862C1100 845 1104 848 1106 856S1110 862 1113 848" fill="none" stroke="#b03060" stroke-width="1.500"/><path d="M1097 858C1102 856 1108 856 1113 852" fill="none" stroke="#5a5ab0"/>
<rect x="1120" y="847" width="93" height="19" class="b"/><path class="k" d="M1120 866H1213V847"/><text x="1123" y="861">关键点过滤器...</text>
<!-- playback -->
<path d="M1223 828V840M1236 828V840" stroke="#ccc" stroke-width="1.500"/><path d="M1226 834 1232 829V839ZM1231 834 1237 829V839Z" fill="none" stroke="#ddd"/>
<path d="M1248 834 1253 829V839Z" fill="none" stroke="#ddd"/><path d="M1255 829V839M1258 829V839M1261 829V839" stroke="#ddd" stroke-width="1.500"/>
<path d="M1274 829 1284 835 1274 840Z" fill="none" stroke="#ccc" stroke-width="1.300"/>
<path d="M1294 829V839M1297 829V839M1300 829V839" stroke="#ddd" stroke-width="1.500"/><path d="M1302 829 1309 834 1302 839Z" fill="none" stroke="#ddd"/>
<path d="M1321 834 1326 829V839ZM1327 829 1332 834 1327 839ZM1320 828V840M1335 828V840" fill="none" stroke="#ddd"/>
<path d="M1224 851V861M1237 851V861" stroke="#ccc"/><path d="M1225 856 1230 852V860ZM1231 852 1236 856 1231 860Z" fill="#ccc"/>
<path d="M1243 846V868" stroke="#222"/>
<rect x="1246" y="847" width="62" height="19" fill="#585858"/><path d="M1246 866V847H1308" stroke="#111" fill="none" stroke-width="1.500"/><text x="1249" y="861" style="font-size:11px">0</text><use href="#sp" x="1310" y="848"/>
<rect x="1328" y="849" width="11" height="13" fill="#e0e4f0"/><rect x="1329" y="851" width="8" height="5" fill="#4060a0"/><circle cx="1338" cy="860" r="4" fill="#bbb" stroke="#333"/>
<path d="M1349 828V840M1349 848V866M1368 828V840" stroke="#222"/>
<!-- nav -->
<circle cx="1355" cy="835" r="4.500" fill="#ddd"/><path d="M1361 828H1365M1363 826V830M1361 834H1365" stroke="#ddd"/>
<rect x="1374" y="828" width="5" height="5" fill="#ddd"/><rect x="1381" y="828" width="5" height="5" fill="#ddd"/><rect x="1374" y="835" width="5" height="5" fill="#ddd"/><circle cx="1382" cy="838" r="3" fill="#bbb"/>
<path d="M1395 827V831M1395 827H1399M1411 827H1407M1411 827V831M1395 842V838M1395 842H1399M1411 842V838" fill="none" stroke="#ddd"/><rect x="1400" y="831" width="7" height="7" fill="#6a8a5a"/>
<rect x="1420" y="827" width="7" height="7" fill="#ccc"/><rect x="1427" y="827" width="7" height="7" fill="#bbb"/><rect x="1420" y="835" width="7" height="7" fill="#6a8a5a"/><rect x="1427" y="835" width="7" height="7" fill="#aaa"/>
<path d="M1350 849 1367 856 1350 863Z" fill="none" stroke="#aaa" stroke-width="1.300"/>
<path d="M1374 856V851M1378 855V848M1381 855V848M1384 855V850M1372 856C1376 864 1382 866 1386 862L1388 852" fill="#eee" stroke="#eee" stroke-width="1.500"/>
<circle cx="1403" cy="857" r="6" fill="none" stroke="#ccc"/><path d="M1400 860 1403 852 1407 860Z" fill="#789868"/>
<rect x="1420" y="851" width="12" height="11" fill="#e4e4e4" stroke="#222"/><path d="M1423 853 1429 859M1423 853H1426M1423 853V856" stroke="#222" fill="none"/>

<!-- floating window -->
<rect x="-6" y="464" width="215" height="226" rx="4" fill="url(#xp)"/>
<rect x="-2" y="465" width="209" height="28" fill="#96abec"/>
<text x="0" y="485" class="m" style="font-size:12px;font-weight:bold;fill:#eef2ff" textLength="132">hQclRBYG-EKEk▼...</text>
<rect x="138" y="471" width="19" height="20" rx="3" fill="#4a78e0" stroke="#dde"/><rect x="142" y="484" width="8" height="3" fill="#fff"/>
<rect x="161" y="471" width="19" height="20" rx="3" fill="#6d90e8" stroke="#dde"/><rect x="165" y="476" width="11" height="10" fill="none" stroke="#fff" stroke-width="1.500"/><rect x="165" y="476" width="11" height="2" fill="#fff"/>
<rect x="184" y="471" width="19" height="20" rx="3" fill="#c87080" stroke="#dde"/><path d="M189 476 198 486M198 476 189 486" stroke="#fff" stroke-width="2"/>
<rect x="0" y="494" width="205" height="192" fill="#f5f5f0"/>
<rect x="0" y="494" width="189" height="30" fill="#3f3f3f"/><rect x="0" y="524" width="189" height="2" fill="#0a0a0a"/>
<path d="M9 503H19L22 506V516H8V509Z" fill="#d8d8d8" stroke="#111"/><path d="M8 509H22M10 505H19M10 513H20" stroke="#111"/>
<path d="M30 504 42 516M42 504 30 516" stroke="#050505" stroke-width="2"/>
<rect x="72.500" y="500.500" width="20" height="20" fill="#fff" stroke="#111"/><circle cx="83" cy="511" r="4.500" fill="#ee1010"/>
<rect x="94.500" y="500.500" width="20" height="20" fill="#fff" stroke="#111"/><circle cx="105" cy="511" r="4.500" fill="#107a10"/>
<rect x="116.500" y="500.500" width="20" height="20" fill="#fff" stroke="#111"/><circle cx="127" cy="511" r="4.500" fill="#1010c8"/>
<circle cx="149" cy="510" r="4.500" fill="#fff"/><path d="M149 505.500A4.500 4.500 0 0 0 149 514.500Z" fill="#000"/>
<rect x="166" y="506" width="9" height="9" rx="1.500" fill="#8c8c8c"/>
<rect x="0" y="526" width="188" height="142" fill="url(#pic)"/>
<circle cx="85.500" cy="603.500" r="62.500" fill="url(#coin)" stroke="#a8a27e" stroke-width="2.500"/>
<circle cx="85.500" cy="603.500" r="58" fill="none" stroke="#2e2a1a" stroke-width="1.200"/>
<rect x="72" y="585" width="30" height="30" fill="#e6e8f4" stroke="#b4ae88" stroke-width="2.500"/>
<text x="87" y="574" class="c cn" style="font-size:37px;fill:#b4ac8c">招</text>
<text x="124" y="617" class="c cn" style="font-size:34px;fill:#c6c0a2">進</text>
<text x="87" y="657" class="c cn" style="font-size:36px;fill:#b4ac8c">財</text>
<text x="50" y="617" class="c cn" style="font-size:34px;fill:#a69e7c">寶</text>
<rect x="189" y="494" width="16" height="175" fill="#fbfbf6"/>
<rect x="190" y="495" width="14" height="15" rx="2" fill="#c4d4f8" stroke="#9ab"/><path d="M193 505 197 500 201 505" fill="none" stroke="#2c4a80" stroke-width="2"/>
<rect x="190" y="511" width="14" height="16" rx="2" fill="#c4d4f8" stroke="#9ab"/><path d="M193 517H201M193 519H201M193 521H201" stroke="#8aa0d0"/>
<rect x="190" y="653" width="14" height="15" rx="2" fill="#c4d4f8" stroke="#9ab"/><path d="M193 658 197 663 201 658" fill="none" stroke="#2c4a80" stroke-width="2"/>
<rect x="173" y="672" width="14" height="13" rx="2" fill="#c4d4f8" stroke="#9ab"/><path d="M177 675 182 678.500 177 682" fill="none" stroke="#2c4a80" stroke-width="2"/>
<rect x="189" y="669" width="16" height="17" fill="#ece9d8"/>
<rect x="0" y="686" width="205" height="1" fill="#46547e"/>

<!-- taskbar -->
<rect y="870" width="1440" height="30" fill="url(#task)"/>
<path d="M0 870H86C94 875 97 882 97 890V899.500H0Z" fill="url(#start)"/>
<path d="M13 878 20 880 19 886 12 884Z" fill="#e84a20"/><path d="M21 880 28 879 27 885 20 887Z" fill="#78c030"/><path d="M12 885 19 887 18 893 11 891Z" fill="#3878d8"/><path d="M20 887 27 886 26 892 19 894Z" fill="#f0c020"/>
<text x="37" y="891" style="font-size:18px;font-style:italic;fill:#e4f0dc;opacity:.85">开始</text>
<text x="40" y="877" style="font-size:18px;fill:#fff;opacity:.5" textLength="127">www.cgmol.com</text>
<rect x="100.500" y="874.500" width="41" height="23" rx="2" fill="none" stroke="#4a80e0"/><rect x="144.500" y="874.500" width="41" height="23" rx="2" fill="none" stroke="#4a80e0"/>
<circle cx="117" cy="881" r="4" fill="#e8a020"/><circle cx="125" cy="881" r="4" fill="#3070d0"/><circle cx="117" cy="889" r="4" fill="#e8c020"/><circle cx="125" cy="889" r="4" fill="#d84020"/>
<circle cx="165" cy="885" r="8" fill="#cfe4fa" stroke="#1f78d8" stroke-width="2"/><path d="M158 885H172" stroke="#1f78d8" stroke-width="2"/>
<rect x="190" y="873" width="159" height="25" rx="3" fill="#1c4fb8"/>
<rect x="201" y="878" width="14" height="14" fill="#d8d8d8" stroke="#111"/><circle cx="208" cy="885" r="4" fill="none" stroke="#222" stroke-width="2"/>
<text x="219" y="890" style="fill:#f4f8ff">无标题</text><text x="258" y="890" class="m" style="font-size:10px;fill:#f4f8ff" textLength="74" xml:space="preserve">- Autodes...</text>
<rect x="350" y="873" width="158" height="25" rx="3" fill="#3d80f0"/>
<circle cx="366" cy="883" r="7" fill="#e8e8f4"/><path d="M361 892 365 884 368 887 371 884 373 892Z" fill="#e85020"/>
<text x="378" y="890" style="fill:#f4f8ff">屏幕录制</text>
<rect x="1310" y="870" width="130" height="30" fill="url(#tray)"/>
<circle cx="1309" cy="885" r="8" fill="#2a78e8" stroke="#bcd8fa"/><path d="M1311 881 1307 885 1311 889" fill="none" stroke="#fff" stroke-width="2"/>
<rect x="1322" y="880" width="12" height="10" fill="#333"/><path d="M1322 880H1334V877H1322Z" fill="#ddd"/><circle cx="1328" cy="885" r="2" fill="#eee"/>
<circle cx="1346" cy="885" r="7" fill="#d8c020"/><path d="M1342 885H1350M1346 881V889" stroke="#2a6a20" stroke-width="2"/><circle cx="1351" cy="890" r="3" fill="#e06020"/>
<circle cx="1372" cy="885" r="10.500" fill="#20b868"/><text x="1372" y="889" class="c" style="font-size:11px;fill:#e8fff0">48</text>
<text x="1399" y="889" style="font-size:12px;fill:#e8f4ff">8:13</text>
</svg>
</div></body></html>
